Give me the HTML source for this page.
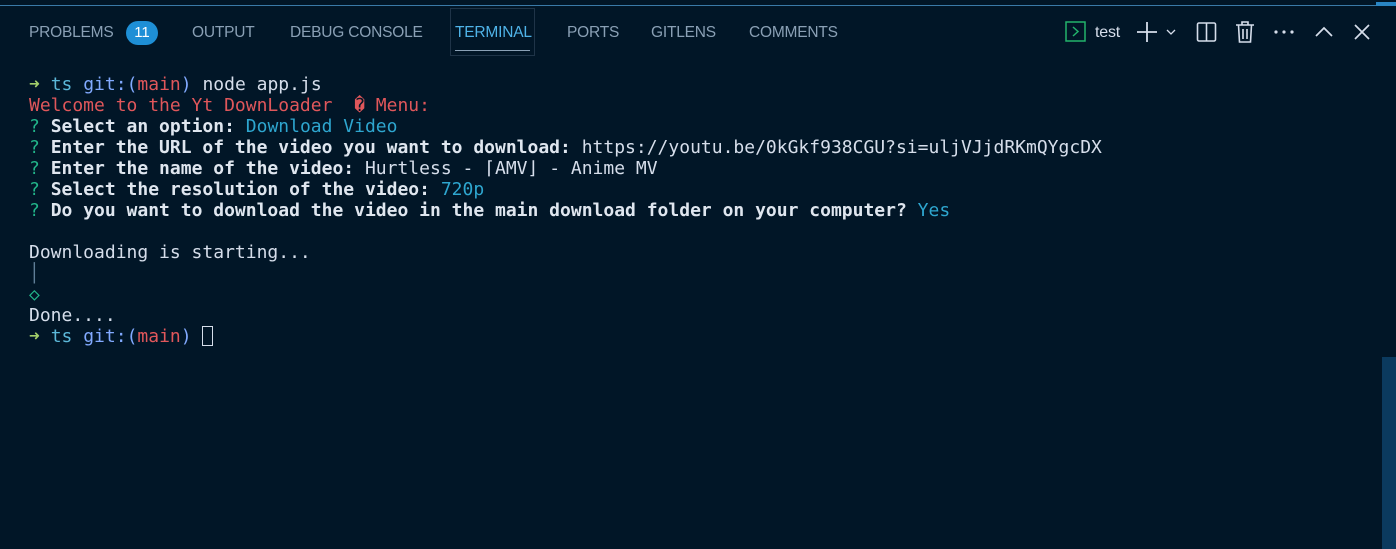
<!DOCTYPE html>
<html><head><meta charset="utf-8"><style>
*{margin:0;padding:0;box-sizing:border-box}
body{width:1396px;height:549px;background:#011627;overflow:hidden;position:relative;font-family:"Liberation Sans",sans-serif}
.topline{position:absolute;left:0;top:5px;width:1396px;height:1px;background:#3a7aa8}
.tb{position:absolute;left:1376px;top:2px;width:20px;height:4px;background:#2a86c4}
.tab{position:absolute;top:24px;font-size:15.5px;color:#8aa0b5;letter-spacing:-0.2px;white-space:nowrap}
.badge{position:absolute;left:126px;top:21px;width:32px;height:24px;border-radius:12px;background:#1e8fd6;color:#fff;font-size:15px;text-align:center;line-height:24px}
.active{position:absolute;left:450px;top:8px;width:85px;height:48px;border:1px solid #1f3448}
.active .ul{position:absolute;left:4px;right:4px;bottom:4px;height:1px;background:#8aa0b5}
.term{position:absolute;left:29px;top:74px;font-family:"DejaVu Sans Mono","Liberation Mono",monospace;font-size:18px;line-height:21px;color:#d6deeb;white-space:pre}
.g{color:#22da6e}.c{color:#5cb8d9}.b{color:#82aaff}.r{color:#e0575b}.a{color:#a3cf6a}.q{color:#22b58a}.k{color:#2ea6cf}
b{font-weight:bold;color:#dfe6ef}
.sb{position:absolute;left:1382px;top:357px;width:14px;height:192px;background:#0b3a5e}
.ic{position:absolute;top:20px}
</style></head><body>
<div class="topline"></div><div class="tb"></div>
<div class="tab" style="left:29px">PROBLEMS</div>
<div class="badge">11</div>
<div class="tab" style="left:192px">OUTPUT</div>
<div class="tab" style="left:290px">DEBUG CONSOLE</div>
<div class="active"><div class="ul"></div></div>
<div class="tab" style="left:455px;color:#4fb3e8">TERMINAL</div>
<div class="tab" style="left:567px">PORTS</div>
<div class="tab" style="left:651px">GITLENS</div>
<div class="tab" style="left:749px">COMMENTS</div>

<svg class="ic" style="left:1065px" width="22" height="24" viewBox="0 0 22 24"><rect x="1" y="2" width="19" height="19" fill="none" stroke="#22b36b" stroke-width="1.5"/><path d="M8 7l5 4.5-5 4.5" fill="none" stroke="#22b36b" stroke-width="1.5"/></svg>
<div class="tab" style="left:1095px;color:#d6deeb;font-size:16px">test</div>
<svg class="ic" style="left:1136px" width="50" height="24" viewBox="0 0 50 24"><path d="M11 2v20M1 12h20" stroke="#d6deeb" stroke-width="1.8"/><path d="M31 10l4 4 4-4" fill="none" stroke="#d6deeb" stroke-width="1.3"/></svg>
<svg class="ic" style="left:1196px" width="22" height="24" viewBox="0 0 22 24"><rect x="1.5" y="3" width="18" height="18" rx="1.5" fill="none" stroke="#d6deeb" stroke-width="1.6"/><path d="M10.5 3v18" stroke="#d6deeb" stroke-width="1.6"/></svg>
<svg class="ic" style="left:1234px" width="22" height="24" viewBox="0 0 22 24"><path d="M2 5h18M8 5V2h6v3M4.5 5l1 17h11l1-17M9 9v10M13 9v10" fill="none" stroke="#d6deeb" stroke-width="1.6"/></svg>
<svg class="ic" style="left:1273px" width="24" height="24" viewBox="0 0 24 24"><circle cx="3" cy="12" r="1.6" fill="#d6deeb"/><circle cx="11" cy="12" r="1.6" fill="#d6deeb"/><circle cx="19" cy="12" r="1.6" fill="#d6deeb"/></svg>
<svg class="ic" style="left:1313px" width="22" height="24" viewBox="0 0 22 24"><path d="M3 16l8-8 8 8" fill="none" stroke="#d6deeb" stroke-width="1.7"/></svg>
<svg class="ic" style="left:1352px" width="22" height="24" viewBox="0 0 22 24"><path d="M3 5l14 14M17 5L3 19" stroke="#d6deeb" stroke-width="1.7"/></svg>

<div class="term"><span class="a">➜</span> <span class="c">ts</span> <span class="b">git:(</span><span class="r">main</span><span class="b">)</span> node app.js
<span class="r">Welcome to the Yt DownLoader  � Menu:</span>
<span class="q">?</span> <b>Select an option:</b> <span class="k">Download Video</span>
<span class="q">?</span> <b>Enter the URL of the video you want to download:</b> https://youtu.be/0kGkf938CGU?si=uljVJjdRKmQYgcDX
<span class="q">?</span> <b>Enter the name of the video:</b> Hurtless - ⌈AMV⌋ - Anime MV
<span class="q">?</span> <b>Select the resolution of the video:</b> <span class="k">720p</span>
<span class="q">?</span> <b>Do you want to download the video in the main download folder on your computer?</b> <span class="k">Yes</span>

Downloading is starting...
<span style="color:#5f7e97">│</span>
<span class="q">◇</span>
Done....
<span class="a">➜</span> <span class="c">ts</span> <span class="b">git:(</span><span class="r">main</span><span class="b">)</span> <span style="display:inline-block;width:11px;height:20px;border:1.5px solid #d6deeb;vertical-align:-4px"></span></div>
<div class="sb"></div>
</body></html>
